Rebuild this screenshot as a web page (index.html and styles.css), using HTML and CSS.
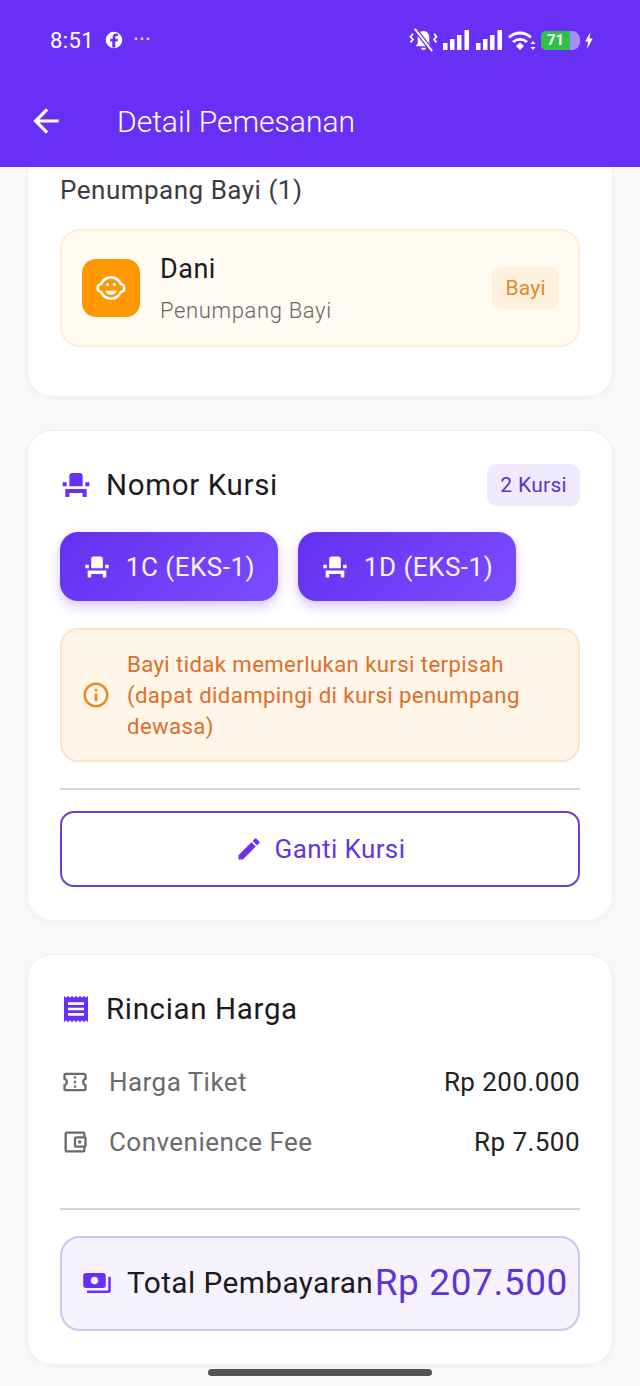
FILE: index.html
```html
<!DOCTYPE html>
<html lang="en">
<head>
    <meta charset="UTF-8">
    <meta name="viewport" content="width=device-width, initial-scale=1.0">
    <title>Detail Pemesanan</title>
    <link rel="stylesheet" href="styles.css">
</head>
<body>
    <svg class="icon-defs" aria-hidden="true">
        <symbol id="i-seat" viewBox="0 0 24 24"><path d="M4 18v3h3v-3h10v3h3v-6H4zm15-8h3v3h-3zM2 10h3v3H2zm15 3H7V5c0-1.1.9-2 2-2h6c1.1 0 2 .9 2 2v8z"/></symbol>
    </svg>

    <header class="app-header">
        <div class="status-bar">
            <div class="status-left">
                <span class="clock">8:51</span>
                <svg class="fb" viewBox="0 0 24 24"><path fill="#fff" fill-rule="evenodd" d="M12 1a11 11 0 1 0 0 22 11 11 0 0 0 0-22zm1.7 21v-8h3l.5-3.6h-3.500V8.500c0-1 .5-1.800 1.900-1.800h1.700V3.600c-.8-.1-1.700-.2-2.500-.2-2.800 0-4.600 1.700-4.600 4.700v2.300H7v3.600h2.700v8z"/></svg>
                <span class="more">···</span>
            </div>
            <div class="status-right">
                <svg class="st-bell" viewBox="0 0 30 26"><path fill="#fff" d="M15 3c-4 0-6 3-6 7v6l-2 3h16l-2-3v-6c0-4-2-7-6-7zm-2.500 17.500a2.500 2.500 0 0 0 5 0z"/><path stroke="#6830f5" stroke-width="4.500" d="M6 1l18 23"/><path stroke="#fff" stroke-width="2" d="M6 1l18 23"/><path fill="none" stroke="#fff" stroke-width="1.800" d="M4 6L1.500 9 4 12l-2.500 3M26 6l2.500 3-2.500 3 2.500 3"/></svg>
                <svg class="st-signal" viewBox="0 0 26 20"><path fill="#fff" d="M0 13h4.500v7H0zM7 9h4.500v11H7zM14 5h4.500v15H14zM21.500 0H26v20h-4.500z"/></svg>
                <svg class="st-signal" viewBox="0 0 26 20"><path fill="#fff" d="M0 13h4.500v7H0zM7 9h4.500v11H7zM14 5h4.500v15H14zM21.500 0H26v20h-4.500z"/></svg>
                <svg class="st-wifi" viewBox="0 0 28 20"><path fill="none" stroke="#fff" stroke-width="2.800" d="M1 7.500c6.500-6 15.500-6 22 0M5 12c4-3.500 10-3.500 14 0"/><path fill="#fff" d="M12 12.500l4 3.500-4 4-4-4zM25 11l2.500 3h-5zM25 20l2.500-3h-5z"/></svg>
                <div class="st-battery"><span class="st-level">71</span></div>
                <svg class="st-bolt" viewBox="0 0 10 18"><path fill="#fff" d="M6.500 0L1 10h3l-1 8 6-11H5.500z"/></svg>
            </div>
        </div>
        <div class="toolbar">
            <svg class="back" viewBox="0 0 24 24"><path fill="#fff" d="M20 11H7.830l5.590-5.590L12 4l-8 8 8 8 1.410-1.410L7.830 13H20v-2z"/></svg>
            <h1>Detail Pemesanan</h1>
        </div>
    </header>

    <main class="content">
        <section class="card card-first">
            <h3 class="group-title">Penumpang Bayi (1)</h3>
            <div class="passenger">
                <div class="passenger-icon">
                    <svg viewBox="0 0 24 24"><path fill="#fff" d="M22.940 12.660c.04-.21.06-.43.06-.66s-.02-.45-.06-.66c-.25-1.510-1.360-2.740-2.810-3.170-.53-1.120-1.280-2.100-2.190-2.910C16.360 3.850 14.280 3 12 3s-4.360.85-5.940 2.260c-.92.81-1.670 1.800-2.190 2.910-1.450.43-2.560 1.650-2.810 3.170-.04.21-.06.43-.06.66s.02.45.06.66c.25 1.510 1.360 2.740 2.810 3.170.52 1.110 1.270 2.090 2.170 2.890C7.620 20.140 9.710 21 12 21s4.380-.86 5.970-2.280c.9-.8 1.650-1.790 2.170-2.890 1.440-.43 2.550-1.650 2.800-3.170zM19 14c-.1 0-.19-.02-.29-.03-.2.67-.49 1.290-.86 1.860C16.600 17.740 14.450 19 12 19s-4.600-1.260-5.850-3.170c-.37-.57-.66-1.190-.86-1.860-.1.01-.19.03-.29.03-1.100 0-2-.9-2-2s.9-2 2-2c.1 0 .19.02.29.03.2-.67.49-1.290.86-1.860C7.400 6.260 9.550 5 12 5s4.600 1.260 5.850 3.170c.37.57.66 1.190.86 1.860.1-.01.19-.03.29-.03 1.100 0 2 .9 2 2s-.9 2-2 2zM7.500 14c.76 1.770 2.490 3 4.500 3s3.740-1.230 4.500-3h-9z"/><circle fill="#fff" cx="14.500" cy="9.500" r="1.250"/><circle fill="#fff" cx="9.500" cy="9.500" r="1.250"/></svg>
                </div>
                <div class="passenger-info">
                    <div class="passenger-name">Dani</div>
                    <div class="passenger-type">Penumpang Bayi</div>
                </div>
                <span class="tag-bayi">Bayi</span>
            </div>
        </section>

        <section class="card">
            <div class="card-head">
                <svg class="head-icon"><use href="#i-seat"/></svg>
                <h2>Nomor Kursi</h2>
                <span class="tag-kursi">2 Kursi</span>
            </div>
            <div class="seats">
                <div class="seat"><svg><use href="#i-seat"/></svg>1C (EKS-1)</div>
                <div class="seat"><svg><use href="#i-seat"/></svg>1D (EKS-1)</div>
            </div>
            <div class="notice">
                <svg viewBox="0 0 24 24"><path fill="#e8891c" d="M11 7h2v2h-2zm0 4h2v6h-2zm1-9C6.480 2 2 6.480 2 12s4.480 10 10 10 10-4.480 10-10S17.520 2 12 2zm0 18c-4.410 0-8-3.590-8-8s3.590-8 8-8 8 3.590 8 8-3.590 8-8 8z"/></svg>
                <p>Bayi tidak memerlukan kursi terpisah (dapat didampingi di kursi penumpang dewasa)</p>
            </div>
            <hr class="divider">
            <button class="change-seat">
                <svg viewBox="0 0 24 24"><path fill="#6830f5" d="M3 17.250V21h3.750L17.810 9.940l-3.750-3.750L3 17.250zM20.710 7.040c.39-.39.39-1.020 0-1.410l-2.340-2.340c-.39-.39-1.020-.39-1.410 0l-1.830 1.830 3.750 3.750 1.830-1.830z"/></svg>
                Ganti Kursi
            </button>
        </section>

        <section class="card">
            <div class="card-head">
                <svg class="head-icon" viewBox="0 0 24 24"><path d="M18 17H6v-2h12v2zm0-4H6v-2h12v2zm0-4H6V7h12v2zM3 22l1.500-1.500L6 22l1.500-1.500L9 22l1.500-1.500L12 22l1.500-1.500L15 22l1.500-1.500L18 22l1.500-1.500L21 22V2l-1.500 1.500L18 2l-1.500 1.500L15 2l-1.500 1.500L12 2l-1.500 1.500L9 2 7.500 3.500 6 2 4.500 3.500 3 2v20z"/></svg>
                <h2>Rincian Harga</h2>
            </div>
            <div class="price-row">
                <svg viewBox="0 0 24 24"><path d="M22 10V6c0-1.110-.9-2-2-2H4c-1.100 0-1.990.89-1.990 2v4c1.100 0 1.990.9 1.990 2s-.89 2-2 2v4c0 1.100.9 2 2 2h16c1.100 0 2-.9 2-2v-4c-1.100 0-2-.9-2-2s.9-2 2-2zm-2-1.460c-1.190.69-2 1.990-2 3.460s.81 2.770 2 3.460V18H4v-2.540c1.190-.69 2-1.990 2-3.460 0-1.480-.8-2.770-1.990-3.460L4 6h16v2.540zM11 15h2v2h-2zm0-4h2v2h-2zm0-4h2v2h-2z"/></svg>
                <span class="price-label">Harga Tiket</span>
                <span class="price-value">Rp 200.000</span>
            </div>
            <div class="price-row">
                <svg viewBox="0 0 24 24"><path d="M21 7.280V5c0-1.100-.9-2-2-2H5c-1.110 0-2 .9-2 2v14c0 1.100.89 2 2 2h14c1.100 0 2-.9 2-2v-2.280c.59-.35 1-.98 1-1.720V9c0-.74-.41-1.380-1-1.720zM20 9v6h-7V9h7zM5 19V5h14v2h-6c-1.100 0-2 .9-2 2v6c0 1.100.9 2 2 2h6v2H5z"/><circle cx="16" cy="12" r="1.500"/></svg>
                <span class="price-label">Convenience Fee</span>
                <span class="price-value">Rp 7.500</span>
            </div>
            <hr class="divider divider-total">
            <div class="total">
                <svg viewBox="0 0 24 24"><path fill="#6830f5" d="M19 14V6c0-1.100-.9-2-2-2H3c-1.100 0-2 .9-2 2v8c0 1.100.9 2 2 2h14c1.100 0 2-.9 2-2zm-9-1c-1.660 0-3-1.340-3-3s1.340-3 3-3 3 1.340 3 3-1.340 3-3 3zm13-6v11c0 1.100-.9 2-2 2H4v-2h17V7h2z"/></svg>
                <span class="total-label">Total Pembayaran</span>
                <span class="total-value">Rp 207.500</span>
            </div>
        </section>
    </main>

    <div class="home-bar"></div>
</body>
</html>
```

FILE: styles.css
```css
* {
    margin: 0;
    padding: 0;
    box-sizing: border-box;
}
body {
    font-family: Roboto, "Liberation Sans", sans-serif;
    background-color: #f8f8f9;
    color: #1c1b1f;
    width: 640px;
    height: 1386px;
    overflow: hidden;
    display: flex;
    flex-direction: column;
}
.icon-defs {
    display: none;
}

/* header */
.app-header {
    background: #6830f5;
    color: #fff;
    height: 167px;
    flex-shrink: 0;
    position: relative;
    z-index: 2;
}
.status-bar {
    height: 80px;
    padding: 0 46px 0 50px;
    display: flex;
    justify-content: space-between;
    align-items: center;
}
.status-left {
    display: flex;
    align-items: center;
}
.clock {
    font-size: 22px;
    letter-spacing: 0.4px;
}
.fb {
    width: 18px;
    height: 18px;
    margin-left: 11px;
}
.more {
    font-size: 23px;
    margin-left: 10px;
    line-height: 20px;
    color: #e6dcff;
}
.status-right {
    display: flex;
    align-items: center;
}
.st-bell {
    width: 29px;
    height: 25px;
}
.st-signal {
    width: 26px;
    height: 20px;
    margin-left: 5px;
}
.st-signal + .st-signal {
    margin-left: 7px;
}
.st-wifi {
    width: 28px;
    height: 20px;
    margin-left: 6px;
}
.st-battery {
    width: 39px;
    height: 19px;
    margin-left: 5px;
    border-radius: 5px 8px 8px 5px;
    background: #a98cf6;
    overflow: hidden;
}
.st-level {
    display: block;
    width: 29px;
    height: 19px;
    background: #2fc04a;
    border-radius: 5px 0 0 5px;
    font-size: 15px;
    font-weight: 700;
    line-height: 19px;
    text-align: center;
}
.st-bolt {
    width: 10px;
    height: 17px;
    margin-left: 4px;
}
.toolbar {
    height: 87px;
    padding: 0 0 0 27px;
    display: flex;
    align-items: center;
}
.back {
    width: 38px;
    height: 38px;
    margin-top: -5px;
}
h1 {
    font-size: 30px;
    font-weight: 300;
    margin-left: 52px;
    margin-top: -5px;
}

/* cards */
.content {
    flex: 1;
    padding: 0 28px;
    display: flex;
    flex-direction: column;
    gap: 35px;
}
.card {
    background: #fff;
    border-radius: 24px;
    box-shadow: 0 0 0 1px #f0f0f2, 0 2px 6px rgba(0, 0, 0, 0.03);
    padding: 33px 32px;
}
.card-first {
    border-radius: 0 0 24px 24px;
    padding-top: 8px;
    padding-bottom: 49px;
}
.group-title {
    font-size: 26px;
    font-weight: 400;
    line-height: 30px;
    color: #3c3c3f;
    letter-spacing: 0.5px;
}
.passenger {
    margin-top: 24px;
    height: 118px;
    background: #fffbf3;
    border: 2px solid #fcefd9;
    border-radius: 20px;
    padding: 0 19px 0 20px;
    display: flex;
    align-items: center;
}
.passenger-icon {
    width: 58px;
    height: 58px;
    border-radius: 14px;
    background: #ff9800;
    display: flex;
    align-items: center;
    justify-content: center;
}
.passenger-icon svg {
    width: 32px;
    height: 32px;
}
.passenger-info {
    flex: 1;
    margin-left: 20px;
}
.passenger-name {
    font-size: 27px;
    line-height: 36px;
    letter-spacing: 0.5px;
}
.passenger-type {
    font-size: 22px;
    font-weight: 300;
    line-height: 30px;
    color: #666;
    letter-spacing: 0.65px;
    margin-top: 9px;
}
.tag-bayi {
    background: #fdf0dd;
    color: #e08a28;
    font-size: 21px;
    line-height: 42px;
    padding: 0 13px;
    border-radius: 9px;
    letter-spacing: 0.3px;
}

.card-head {
    display: flex;
    align-items: center;
    height: 42px;
}
.head-icon {
    width: 32px;
    height: 32px;
    fill: #6830f5;
}
h2 {
    flex: 1;
    font-size: 29.5px;
    font-weight: 400;
    margin-left: 14px;
    letter-spacing: 0.65px;
}
.tag-kursi {
    background: #f0eafe;
    color: #5b34c8;
    font-size: 21px;
    line-height: 42px;
    padding: 0 13px;
    border-radius: 9px;
    letter-spacing: 0.3px;
}
.seats {
    display: flex;
    gap: 20px;
    margin-top: 26px;
}
.seat {
    width: 218px;
    height: 69px;
    border-radius: 18px;
    background: linear-gradient(135deg, #6430f0, #7c4dff);
    box-shadow: 0 5px 12px rgba(106, 48, 248, 0.28);
    color: #f6f2ff;
    font-size: 26px;
    letter-spacing: 0.5px;
    display: flex;
    align-items: center;
    justify-content: center;
    gap: 15px;
}
.seat svg {
    width: 28px;
    height: 28px;
    fill: #fff;
}
.notice {
    margin-top: 27px;
    height: 134px;
    background: #fff5e9;
    border: 2px solid #fbe3c4;
    border-radius: 18px;
    padding: 0 19px;
    display: flex;
    align-items: center;
    gap: 16px;
}
.notice svg {
    width: 30px;
    height: 30px;
    flex-shrink: 0;
}
.notice p {
    font-size: 22.2px;
    line-height: 31px;
    color: #dc6f2a;
    letter-spacing: 0.38px;
}
.divider {
    border: none;
    height: 2px;
    background: #d6d6d8;
    margin-top: 26px;
}
.change-seat {
    margin-top: 21px;
    width: 100%;
    height: 76px;
    background: #fff;
    border: 2px solid #6a3de0;
    border-radius: 14px;
    color: #6435e4;
    font-family: inherit;
    font-size: 26px;
    font-weight: 400;
    letter-spacing: 0.4px;
    display: flex;
    align-items: center;
    justify-content: center;
    gap: 12px;
}
.change-seat svg {
    width: 28px;
    height: 28px;
}
.price-row {
    display: flex;
    align-items: center;
    font-size: 26px;
    letter-spacing: 0.45px;
    height: 60px;
}
.card-head + .price-row {
    margin-top: 22px;
}
.price-row svg {
    width: 28px;
    height: 28px;
    margin-left: 1px;
    fill: #6b6b6b;
}
.price-label {
    flex: 1;
    margin-left: 20px;
    color: #6b6b6e;
}
.price-value {
    color: #222;
}
.divider-total {
    margin-top: 36px;
}
.total {
    margin-top: 26px;
    height: 95px;
    background: #f6f2fe;
    border: 2px solid #d0c3ef;
    border-radius: 20px;
    padding: 0 10px 2px 20px;
    display: flex;
    align-items: center;
    white-space: nowrap;
}
.total svg {
    width: 30px;
    height: 30px;
}
.total-label {
    flex: 1;
    margin-left: 15px;
    font-size: 29.8px;
    letter-spacing: 0.42px;
}
.total-value {
    font-size: 37px;
    color: #5e35d8;
    letter-spacing: 0.6px;
}
.home-bar {
    position: absolute;
    left: 208px;
    top: 1369px;
    width: 224px;
    height: 7px;
    border-radius: 4px;
    background: #555;
}
```
